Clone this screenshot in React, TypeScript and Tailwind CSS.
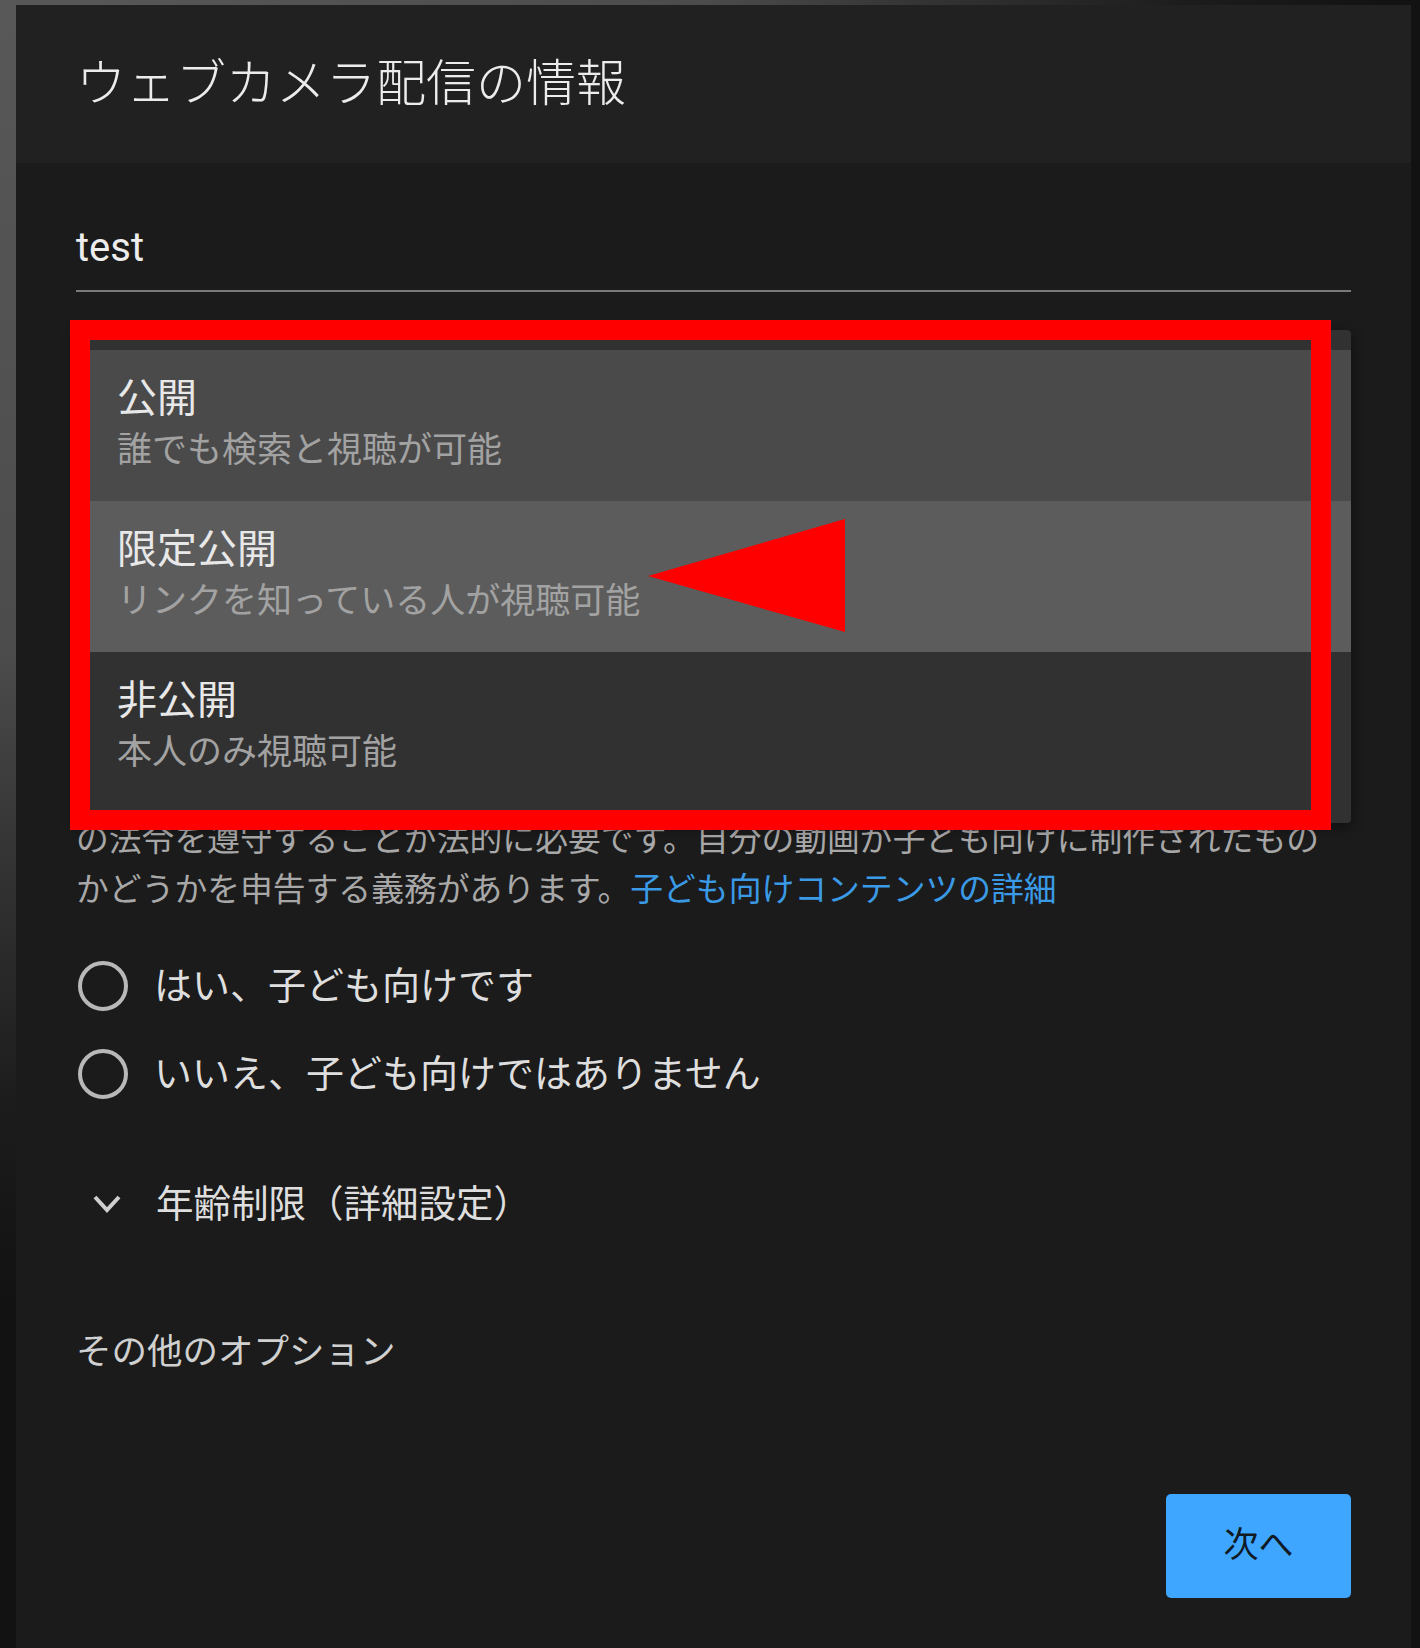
import React from 'react'

const menuItems = [
  { title: '公開', sub: '誰でも検索と視聴が可能', bg: 'bg-[#4a4a4a]' },
  { title: '限定公開', sub: 'リンクを知っている人が視聴可能', bg: 'bg-[#5c5c5c]' },
  { title: '非公開', sub: '本人のみ視聴可能', bg: 'bg-[#313131]' },
]

const Radio = ({ label }: { label: string }) => (
  <label className="flex items-center gap-[26px] h-[50px]">
    <span className="w-[50px] h-[50px] rounded-full border-[4px] border-[#b8b8b8] shrink-0" />
    <span className="text-[38px] leading-[50px] text-[#dedede]">{label}</span>
  </label>
)

const App: React.FC = () => {
  return (
    <div className="w-[1420px] h-[1648px] overflow-hidden pt-[5px] pl-[16px] bg-[#151515] bg-[radial-gradient(1400px_1300px_at_0_0,#585858_0%,#4c4c4c_50%,#353535_65%,#1c1c1c_85%,#121212_100%)] font-['Roboto','Noto_Sans_CJK_JP',sans-serif]">
      <div className="w-[1395px] h-[1643px] bg-[#1b1b1b] flex flex-col">
        {/* Header */}
        <header className="h-[158px] shrink-0 bg-[#212121] flex items-center pl-[60px]">
          <h1 className="text-[50px] font-light text-[#ececec] leading-none">ウェブカメラ配信の情報</h1>
        </header>

        {/* Body */}
        <div className="relative px-[60px] pt-[61px] flex flex-col">
          <div className="border-b-2 border-[#7a7a7a] pb-[18px] text-[40px] leading-[48px] text-[#ededed]">test</div>

          {/* visibility field, covered by the open menu */}
          <div className="h-[473px]" />

          <p className="text-[32.8px] leading-[50px] text-[#a8a8a8] whitespace-nowrap">
            <span className="block">世界中の地域で、児童オンラインプライバシー保護法（COPPA）やその他</span>
            <span className="block">の法令を遵守することが法的に必要です。自分の動画が子ども向けに制作されたもの</span>
            <span className="block">
              かどうかを申告する義務があります。
              <a className="text-[#3a9ae6]">子ども向けコンテンツの詳細</a>
            </span>
          </p>

          <div className="mt-[46px] pl-[2px] flex flex-col gap-[38px]">
            <Radio label="はい、子ども向けです" />
            <Radio label="いいえ、子ども向けではありません" />
          </div>

          <div className="mt-[80px] h-[50px] flex items-center pl-[17px] gap-[35px]">
            <svg width="28" height="18" viewBox="0 0 28 18" fill="none">
              <path d="M2 2 L14 15 L26 2" stroke="#cfcfcf" strokeWidth="4" />
            </svg>
            <span className="text-[37.5px] leading-[50px] text-[#dedede]">年齢制限（詳細設定）</span>
          </div>

          <div className="mt-[98px] text-[35.5px] leading-[50px] text-[#d0d0d0]">その他のオプション</div>

          <div className="mt-[117px] flex justify-end">
            <button className="w-[185px] h-[104px] rounded-[5px] bg-[#3ea6ff] text-[35px] text-[#0f1a24]">次へ</button>
          </div>

          {/* Open visibility menu */}
          <div className="absolute left-[60px] top-[167px] w-[1275px] h-[493px] py-[20px] bg-[#313131] rounded-[4px] shadow-[0_4px_14px_rgba(0,0,0,0.45)] flex flex-col">
            {menuItems.map((item) => (
              <div key={item.title} className={`h-[151px] pl-[41px] pt-[21px] ${item.bg}`}>
                <div className="text-[40px] leading-[55px] text-[#e8e8e8]">{item.title}</div>
                <div className="text-[35px] leading-[50px] text-[#a2a2a2]">{item.sub}</div>
              </div>
            ))}
          </div>

          {/* Red annotation */}
          <div className="absolute left-[54px] top-[157px] w-[1261px] h-[510px] border-[20px] border-[#ff0000]" />
          <svg className="absolute left-[632px] top-[356px]" width="197" height="113" viewBox="0 0 197 113">
            <polygon points="0,57 197,0 197,113" fill="#ff0000" />
          </svg>
        </div>
      </div>
    </div>
  )
}

export default App
